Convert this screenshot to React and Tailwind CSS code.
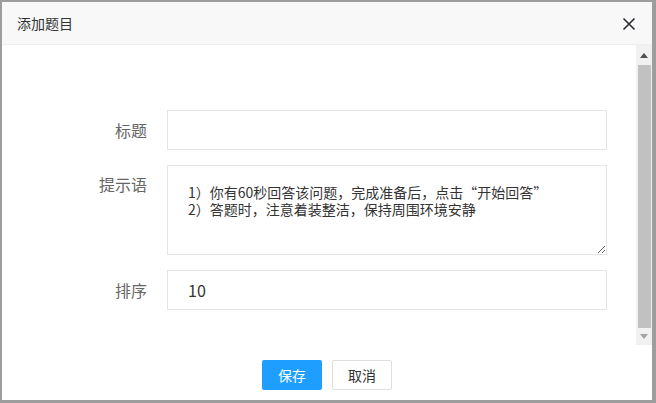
import React from "react";

export default function App() {
  const font = { fontFamily: '"Noto Sans CJK SC", "Microsoft YaHei", sans-serif' };
  return (
    <div className="w-[656px] h-[403px] bg-[#9d9d9d] p-[2px] pr-[4px] pb-[3px] overflow-hidden" style={font}>
      <div className="w-full h-full bg-white flex flex-col">
        {/* header */}
        <div className="h-[43px] shrink-0 bg-[#f8f8f8] border-b border-[#eeeeee] flex items-center justify-between pl-[15px] pr-[16px]">
          <span className="text-[14px] text-[#333333]">添加题目</span>
          <svg width="14" height="14" viewBox="0 0 14 14" className="mt-[1px]">
            <path d="M1.5 1.5 L12.5 12.5 M12.5 1.5 L1.5 12.5" stroke="#2b2b33" strokeWidth="1.6" fill="none" />
          </svg>
        </div>
        {/* body */}
        <div className="h-[300px] shrink-0 flex">
          <div className="flex-1 pt-[65px] pr-[29px] flex flex-col gap-[15px]">
            <div className="flex items-center">
              <label className="w-[145px] text-right text-[16px] text-[#666666]">标题</label>
              <div className="ml-[20px] flex-1 h-[40px] border border-[#e6e6e6]"></div>
            </div>
            <div className="flex items-start">
              <label className="w-[145px] text-right text-[16px] text-[#666666] mt-[7px]">提示语</label>
              <textarea
                readOnly
                className="ml-[20px] flex-1 h-[90px] border border-[#e6e6e6] pl-[20px] pt-[18px] text-[14px] leading-[17px] text-[#333333] outline-none resize-y"
                style={font}
                defaultValue={"1）你有60秒回答该问题，完成准备后，点击“开始回答”\n2）答题时，注意着装整洁，保持周围环境安静"}
              />
            </div>
            <div className="flex items-center">
              <label className="w-[145px] text-right text-[16px] text-[#666666]">排序</label>
              <div className="ml-[20px] flex-1 h-[40px] border border-[#e6e6e6] flex items-center pl-[20px] text-[16px] text-[#333333]">10</div>
            </div>
          </div>
          {/* scrollbar */}
          <div className="w-[16px] bg-[#f1f1f1] flex flex-col items-center">
            <div className="h-[20px] flex items-center justify-center">
              <svg width="8" height="5" viewBox="0 0 8 5"><path d="M0 5 L4 0 L8 5 Z" fill="#505050" /></svg>
            </div>
            <div className="w-[13px] flex-1 bg-[#c1c1c1]"></div>
            <div className="h-[17px] flex items-center justify-center">
              <svg width="8" height="5" viewBox="0 0 8 5"><path d="M0 0 L4 5 L8 0 Z" fill="#a3a3a3" /></svg>
            </div>
          </div>
        </div>
        {/* footer */}
        <div className="flex justify-center gap-[10px] pt-[15px]">
          <button className="w-[60px] h-[30px] rounded-[2px] bg-[#1e9fff] text-white text-[14px]" style={font}>保存</button>
          <button className="w-[60px] h-[30px] rounded-[2px] bg-white border border-[#dedede] text-[#333333] text-[14px]" style={font}>取消</button>
        </div>
      </div>
    </div>
  );
}
